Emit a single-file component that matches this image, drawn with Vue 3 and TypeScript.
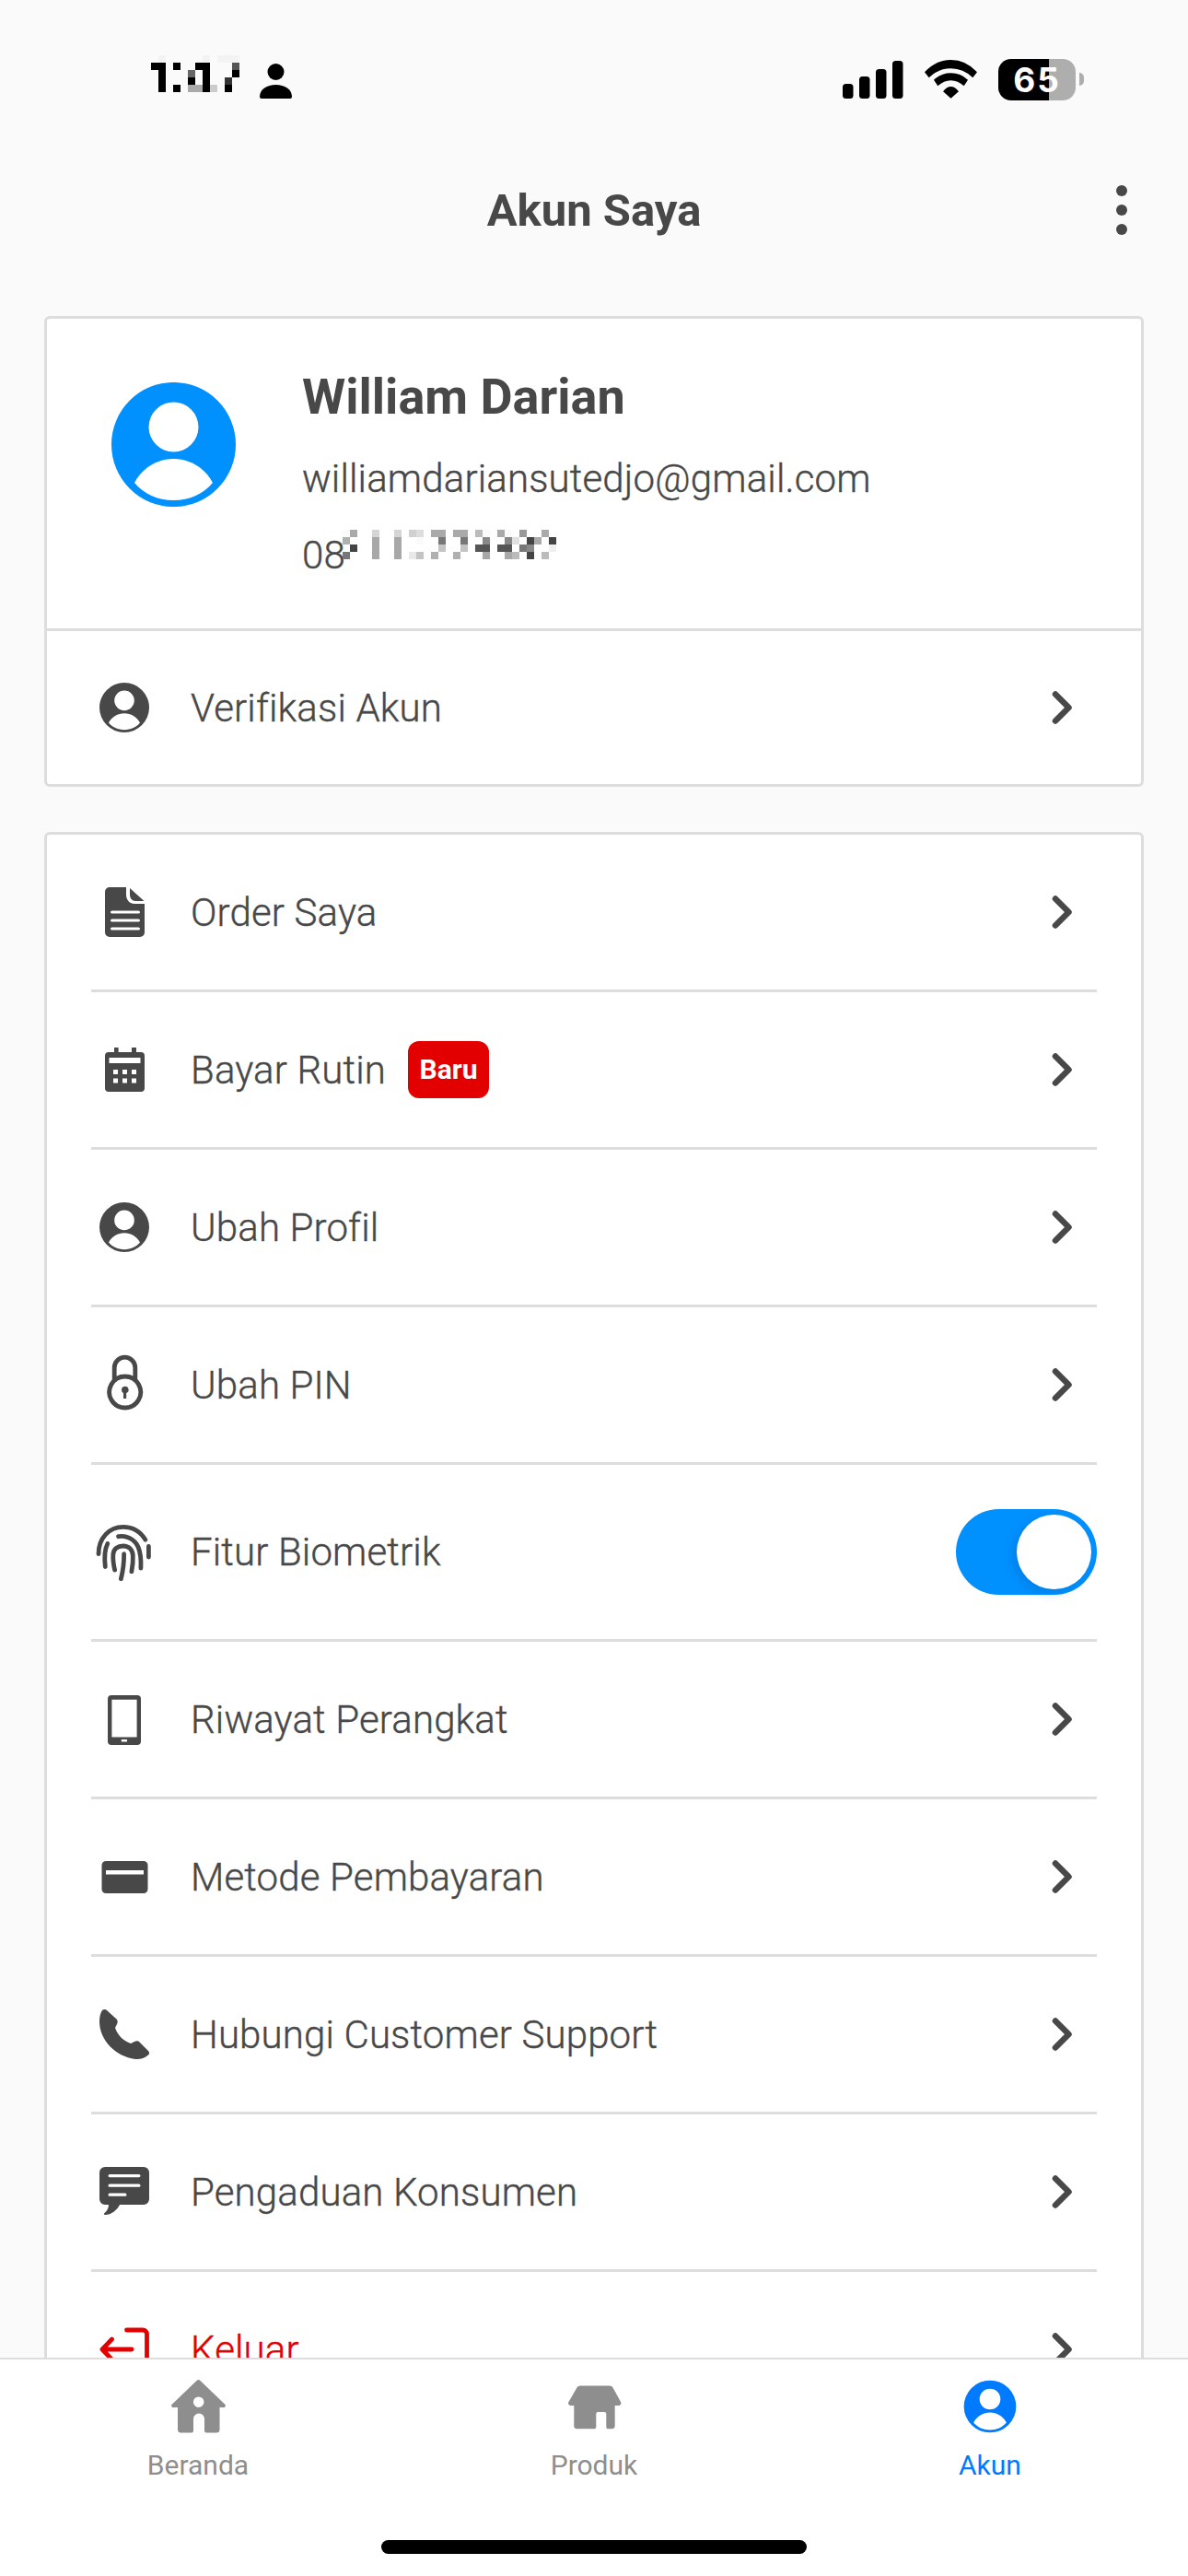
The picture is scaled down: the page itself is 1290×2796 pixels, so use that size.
<template>
  <div class="app">
    <!-- Status bar -->
    <div class="status">
      <div class="status-left">
        <svg class="time" viewBox="0 0 96 40" shape-rendering="crispEdges" role="img" aria-label="Waktu">
          <rect v-for="(p, i) in timePixels" :key="i" :x="p[0] * 8" :y="p[1] * 8" width="8" height="8" :fill="p[2]" />
        </svg>
        <svg class="status-person" viewBox="0 0 35 38">
          <circle cx="17.5" cy="9" r="9" />
          <path d="M0 36C0 28 8 23 17.5 23S35 28 35 36a2 2 0 0 1-2 2H2a2 2 0 0 1-2-2z" />
        </svg>
      </div>
      <div class="status-right">
        <svg class="signal" viewBox="0 0 66 41">
          <rect x="0" y="25" width="11.5" height="16" rx="3.5" />
          <rect x="18" y="17" width="11.5" height="24" rx="3.5" />
          <rect x="36" y="9" width="11.5" height="32" rx="3.5" />
          <rect x="54" y="0" width="11.5" height="41" rx="3.5" />
        </svg>
        <svg class="wifi" viewBox="0 0 57 42">
          <path d="M0 13.3Q12 0 28.5 0T57 13.3L52.3 19.3Q42 9.3 28.5 9.3T4.7 19.3z" />
          <path d="M10 21.7Q18 14.3 28.5 14.3T47 21.7L42.7 28.3Q36 22.3 28.5 22.3T14.3 28.3z" />
          <path d="M20 34.3Q24 29 28.5 29T37 34.3L28.5 41.7z" />
        </svg>
        <div class="battery">65</div>
      </div>
    </div>

    <!-- Header -->
    <header class="topbar">
      <h1 class="title">Akun Saya</h1>
      <button class="more" aria-label="Menu">
        <span class="dot"></span>
        <span class="dot"></span>
        <span class="dot"></span>
      </button>
    </header>

    <!-- Content -->
    <main class="content">
      <section class="card profile-card">
        <div class="profile">
          <svg class="avatar" viewBox="9 9 54 54">
            <path fill-rule="evenodd" :d="icons.person.fill" />
          </svg>
          <div class="profile-text">
            <div class="name">William Darian</div>
            <div class="email">williamdariansutedjo@gmail.com</div>
            <div class="phone">
              <span>08</span>
              <svg class="phone-blur" viewBox="0 0 232 32" shape-rendering="crispEdges" role="img" aria-label="Nomor disamarkan">
                <rect v-for="(p, i) in phonePixels" :key="i" :x="p[0] * 8" :y="p[1] * 8" width="8" height="8" :fill="p[2]" />
              </svg>
            </div>
          </div>
        </div>
        <div class="row verify-row">
          <svg class="icon" viewBox="0 0 72 72">
            <path fill="currentColor" fill-rule="evenodd" :d="icons.person.fill" />
          </svg>
          <span class="label">Verifikasi Akun</span>
          <svg class="chevron" viewBox="0 0 24 36"><path d="M4 3.5L18.5 18L4 32.5" /></svg>
        </div>
      </section>

      <section class="card menu-card">
        <div
          v-for="item in menu"
          :key="item.label"
          class="row"
          :class="{ 'toggle-row': item.toggle, danger: item.danger }"
        >
          <svg class="icon" viewBox="0 0 72 72">
            <path v-if="icons[item.icon].fill" fill="currentColor" fill-rule="evenodd" :d="icons[item.icon].fill" />
            <path v-if="icons[item.icon].line" class="icon-line" :d="icons[item.icon].line" />
          </svg>
          <span class="label">{{ item.label }}</span>
          <span v-if="item.badge" class="badge">{{ item.badge }}</span>
          <button
            v-if="item.toggle"
            class="toggle"
            :class="{ on: biometric }"
            aria-label="Fitur Biometrik"
            @click="biometric = !biometric"
          >
            <span class="knob"></span>
          </button>
          <svg v-else class="chevron" viewBox="0 0 24 36"><path d="M4 3.5L18.5 18L4 32.5" /></svg>
        </div>
      </section>
    </main>

    <!-- Bottom nav -->
    <nav class="tabbar">
      <div class="tabs">
        <div v-for="tab in tabs" :key="tab.label" class="tab" :class="{ active: tab.active }">
          <svg class="tab-icon" viewBox="0 0 72 72">
            <path fill="currentColor" fill-rule="evenodd" :d="icons[tab.icon].fill" :transform="tab.transform" />
          </svg>
          <span class="tab-label">{{ tab.label }}</span>
        </div>
      </div>
      <div class="home-indicator"></div>
    </nav>
  </div>
</template>

<script setup lang="ts">
import { ref } from 'vue'

type Pixel = [number, number, string]

interface IconDef {
  fill?: string
  line?: string
}

interface MenuItem {
  icon: string
  label: string
  badge?: string
  toggle?: boolean
  danger?: boolean
}

const biometric = ref(true)

const circle = (cx: number, cy: number, r: number) =>
  `M${cx - r} ${cy}a${r} ${r} 0 1 0 ${r * 2} 0a${r} ${r} 0 1 0 ${-r * 2} 0z`

const bar = (x: number, y: number, w: number) =>
  `M${x + 1.6} ${y}h${w - 3.2}a1.6 1.6 0 0 1 0 3.2h${-(w - 3.2)}a1.6 1.6 0 0 1 0-3.2z`

const square = (x: number, y: number, s: number) => `M${x} ${y}h${s}v${s}h${-s}z`

const icons: Record<string, IconDef> = {
  person: {
    fill:
      circle(36, 36, 27) +
      circle(36, 28.4, 10.8) +
      'M19 52.6C22.2 46.2 29 42.2 36 42.2C43 42.2 49.8 46.2 53 52.6C49 57.4 43 60.2 36 60.2C29 60.2 23 57.4 19 52.6z'
  },
  order: {
    fill:
      'M20 9H38V17C38 23 42 27 47 27H58V58a5 5 0 0 1-5 5H20a5 5 0 0 1-5-5V14a5 5 0 0 1 5-5z' +
      bar(21, 34.4, 32) +
      bar(21, 43.4, 32) +
      bar(21, 52.4, 32) +
      'M42 10L57.5 24H48C44.5 24 42 21 42 17z'
  },
  calendar: {
    fill:
      'M25 12h4.6v5h14.4v-5h5v5H54a4 4 0 0 1 4 4V56a4 4 0 0 1-4 4H19a4 4 0 0 1-4-4V21a4 4 0 0 1 4-4h6z' +
      'M19.5 23h34v6h-34z' +
      [24, 34, 44].flatMap((x) => [36, 45.5].map((y) => square(x, y, 5))).join('')
  },
  lock: {
    fill: 'M33 41.6a3.8 3.8 0 1 1 5.2 3.5V51h-3.2v-5.9a3.8 3.8 0 0 1-2-3.5z',
    line: 'M25.2 31V17.5a11.3 11.3 0 0 1 22.6 0V31M36.7 27a17 17 0 1 0 0.01 0z'
  },
  fingerprint: {
    line:
      'M8 37.7C8 20 20 8.4 34.6 8.4C45 8.4 53.5 13.5 58.9 22.2M62.4 29.5V41' +
      'M15.3 51.5C14 40 15 32 17.8 26.5M29.6 18.7C37 17 47 21 51 30C53.5 36 54.3 45 53.9 53.2' +
      'M25.6 55C24 48 23.5 43 23.9 37.7C24.5 32 29 29 34.6 29C41 29 45 33 45.3 39.5C45.6 45 45 51 43.9 56.7' +
      'M32.4 64.6C34.5 56 35.8 47 35.6 37.7'
  },
  device: {
    fill:
      'M22 10H50a4 4 0 0 1 4 4V60a4 4 0 0 1-4 4H22a4 4 0 0 1-4-4V14a4 4 0 0 1 4-4z' +
      'M22.4 14.8V55.5H49.6V14.8z' +
      'M32.8 58h6.2v2.4h-6.2z'
  },
  card: {
    fill:
      'M16 19H57a4.5 4.5 0 0 1 4.5 4.5V49.5a4.5 4.5 0 0 1-4.5 4.5H16a4.5 4.5 0 0 1-4.5-4.5V23.5a4.5 4.5 0 0 1 4.5-4.5z' +
      'M16 29V33.5H57V29z'
  },
  phone: {
    fill:
      'M12 10C14 8.5 16 9 17 10L27.5 19.5C29 21 29 23 28 25L26 29C28.5 36.5 35 43.5 43 46L47 44C49 43 51 43 52.5 44.5L62 54C63.5 55.5 63.5 57 62 58.5C58 62 53 63.5 48 63C26 60 9 42 9 22C9 17 10 13 12 10z'
  },
  chat: {
    fill:
      'M15 9H57a6 6 0 0 1 6 6V44a6 6 0 0 1-6 6H31C28 56 22 61 15 61a1 1 0 0 1-1-1.5C17 57 19 54 19 50H15a6 6 0 0 1-6-6V15a6 6 0 0 1 6-6z' +
      bar(18.5, 17, 35) +
      bar(18.5, 27.6, 35) +
      bar(18.5, 37.6, 20)
  },
  logout: {
    line: 'M38.5 15H56a4.5 4.5 0 0 1 4.5 4.5V52.5a4.5 4.5 0 0 1-4.5 4.5H38.5M44 36H13M22.5 25L12 36L22.5 47'
  },
  home: {
    fill:
      'M34.5 8a3 3 0 0 1 4 0L64.5 33a2 2 0 0 1-1.5 4H59.5V61a3.5 3.5 0 0 1-3.5 3.5H45a2 2 0 0 1-2-2V49.5a6 6 0 0 0-12 0V62.5a2 2 0 0 1-2 2H17.5a3.5 3.5 0 0 1-3.5-3.5V37H10a2 2 0 0 1-1.5-4z' +
      circle(36.7, 31.2, 5.8)
  },
  store: {
    fill:
      'M21 13.5H53a4 4 0 0 1 3.5 2L65 31a2.5 2.5 0 0 1-2 4H58.7V57a3.2 3.2 0 0 1-3.2 3.2H51a1.7 1.7 0 0 1-1.7-1.7V44a2 2 0 0 0-2-2H40.3a2 2 0 0 0-2 2V58.5a1.7 1.7 0 0 1-1.7 1.7H17.5a3.2 3.2 0 0 1-3.2-3.2V35H10.5a2.5 2.5 0 0 1-2-4L17.5 15.5a4 4 0 0 1 3.5-2z'
  }
}

const menu: MenuItem[] = [
  { icon: 'order', label: 'Order Saya' },
  { icon: 'calendar', label: 'Bayar Rutin', badge: 'Baru' },
  { icon: 'person', label: 'Ubah Profil' },
  { icon: 'lock', label: 'Ubah PIN' },
  { icon: 'fingerprint', label: 'Fitur Biometrik', toggle: true },
  { icon: 'device', label: 'Riwayat Perangkat' },
  { icon: 'card', label: 'Metode Pembayaran' },
  { icon: 'phone', label: 'Hubungi Customer Support' },
  { icon: 'chat', label: 'Pengaduan Konsumen' },
  { icon: 'logout', label: 'Keluar', danger: true }
]

const tabs = [
  { icon: 'home', label: 'Beranda' },
  { icon: 'store', label: 'Produk' },
  { icon: 'person', label: 'Akun', active: true, transform: 'translate(-1.8 -1.8) scale(1.05)' }
]

// Jam di status bar disamarkan jadi blok piksel
const timePixels: Pixel[] = [
  [1, 0, '#f3f3f3'], [7, 0, '#f3f3f3'], [9, 0, '#f3f3f3'], [10, 0, '#f3f3f3'], [11, 0, '#f3f3f3'],
  [0, 1, '#000'], [1, 1, '#000'], [3, 1, '#000'], [6, 1, '#000'], [7, 1, '#000'], [11, 1, '#555'],
  [1, 2, '#000'], [5, 2, '#666'], [7, 2, '#000'], [11, 2, '#000'],
  [1, 3, '#000'], [5, 3, '#000'], [7, 3, '#000'], [10, 3, '#333'],
  [1, 4, '#000'], [3, 4, '#000'], [5, 4, '#aaa'], [6, 4, '#aaa'], [7, 4, '#000'], [8, 4, '#ccc'], [10, 4, '#000']
]

// Nomor telepon yang disamarkan
const phonePixels: Pixel[] = [
  [0, 0, '#fafafa'], [1, 0, '#aaa'], [4, 0, '#d5d5d5'], [7, 0, '#d5d5d5'], [9, 0, '#d0d0d0'], [10, 0, '#ddd'],
  [12, 0, '#aaa'], [13, 0, '#aaa'], [15, 0, '#aaa'], [16, 0, '#aaa'], [18, 0, '#bbb'], [19, 0, '#fafafa'],
  [21, 0, '#aaa'], [22, 0, '#fafafa'], [24, 0, '#999'], [27, 0, '#aaa'],
  [0, 1, '#b0b0b0'], [4, 1, '#a8a8a8'], [7, 1, '#a8a8a8'], [10, 1, '#fafafa'], [13, 1, '#777'], [16, 1, '#777'],
  [19, 1, '#888'], [22, 1, '#888'], [23, 1, '#e0e0e0'], [25, 1, '#444'], [26, 1, '#aaa'], [28, 1, '#444'],
  [1, 2, '#444'], [4, 2, '#a8a8a8'], [7, 2, '#a8a8a8'], [13, 2, '#c4c4c4'], [16, 2, '#c4c4c4'], [18, 2, '#555'],
  [19, 2, '#555'], [21, 2, '#555'], [22, 2, '#555'], [24, 2, '#777'], [25, 2, '#888'], [28, 2, '#f0f0f0'],
  [0, 3, '#777'], [4, 3, '#a8a8a8'], [7, 3, '#a8a8a8'], [9, 3, '#e8e8e8'], [10, 3, '#c4c4c4'], [12, 3, '#b0b0b0'],
  [15, 3, '#b0b0b0'], [19, 3, '#a8a8a8'], [22, 3, '#a8a8a8'], [23, 3, '#bbb'], [25, 3, '#444'], [27, 3, '#bbb']
]
</script>

<style scoped>
.app {
  width: 1290px;
  height: 2796px;
  display: flex;
  flex-direction: column;
  overflow: hidden;
  background: #fafafa;
  color: #484848;
  font-family: Roboto, "Liberation Sans", sans-serif;
}

/* Status bar */
.status {
  flex: none;
  box-sizing: border-box;
  height: 130px;
  padding: 42px 113px 0 164px;
  display: flex;
  align-items: center;
  justify-content: space-between;
  color: #000;
}

.status-left {
  display: flex;
  align-items: center;
  gap: 22px;
}

.time {
  width: 96px;
  height: 40px;
  margin-bottom: 12px;
}

.status-person {
  width: 35px;
  height: 38px;
  margin-top: 4px;
  fill: #000;
}

.status-right {
  display: flex;
  align-items: center;
  gap: 23px;
}

.signal {
  width: 66px;
  height: 41px;
  fill: #000;
}

.wifi {
  width: 57px;
  height: 42px;
  fill: #000;
}

.battery {
  position: relative;
  width: 84px;
  height: 45px;
  margin-right: 9px;
  border-radius: 14px;
  background: linear-gradient(90deg, #000 65%, #aeaeae 65%);
  color: #fff;
  font-family: Inter, Roboto, sans-serif;
  font-size: 37px;
  font-weight: 700;
  letter-spacing: 2px;
  line-height: 45px;
  text-align: center;
}

.battery::after {
  content: "";
  position: absolute;
  left: 88px;
  top: 15px;
  width: 5px;
  height: 14px;
  border-radius: 0 7px 7px 0;
  background: #aeaeae;
}

/* Header */
.topbar {
  flex: none;
  box-sizing: border-box;
  height: 196px;
  padding-right: 66px;
  display: grid;
  grid-template-columns: 1fr auto 1fr;
  align-items: center;
}

.title {
  grid-column: 2;
  margin: 0 0 0 66px;
  font-size: 49px;
  font-weight: 700;
}

.more {
  grid-column: 3;
  justify-self: end;
  padding: 0;
  border: none;
  background: none;
  display: flex;
  flex-direction: column;
  gap: 9px;
}

.dot {
  width: 12px;
  height: 12px;
  border-radius: 50%;
  background: #484848;
}

/* Content */
.content {
  flex: 1;
  min-height: 0;
  overflow: hidden;
  padding: 17px 48px 0;
  display: flex;
  flex-direction: column;
  gap: 49px;
}

.card {
  flex: none;
  background: #fff;
  border: 3px solid #ddd;
  border-radius: 6px;
  padding: 0 48px;
}

.profile-card {
  padding: 0;
}

.profile {
  height: 288px;
  padding: 48px 0 0 70px;
  display: flex;
  gap: 72px;
  border-bottom: 3px solid #ddd;
}

.avatar {
  flex: none;
  width: 135px;
  height: 135px;
  margin-top: 21px;
  fill: #0091ff;
}

.name {
  margin-top: 1px;
  font-size: 54px;
  font-weight: 700;
  line-height: 72px;
}

.email,
.phone,
.label {
  font-size: 42px;
  font-weight: 300;
  letter-spacing: 0.15px;
  -webkit-text-stroke: 0.4px;
}

.email {
  margin-top: 23px;
  line-height: 60px;
}

.phone {
  margin-top: 23px;
  line-height: 60px;
  display: flex;
  align-items: center;
}

.phone-blur {
  width: 232px;
  height: 32px;
  margin-top: -24px;
  margin-left: -3px;
}

.row {
  box-sizing: border-box;
  height: 171px;
  display: flex;
  align-items: center;
  border-bottom: 3px solid #ddd;
}

.verify-row {
  height: 166px;
  margin: 0 48px;
  border-bottom: none;
}

.toggle-row {
  height: 192px;
}

.danger {
  color: #e20000;
}

.icon {
  flex: none;
  width: 72px;
  height: 72px;
  margin-right: 36px;
}

.icon-line {
  fill: none;
  stroke: currentColor;
  stroke-width: 4.8;
  stroke-linecap: round;
  stroke-linejoin: round;
}

.badge {
  margin-left: 24px;
  width: 88px;
  height: 62px;
  border-radius: 12px;
  background: #e20000;
  color: #fff;
  font-size: 30px;
  font-weight: 700;
  line-height: 62px;
  text-align: center;
}

.chevron {
  flex: none;
  width: 24px;
  height: 36px;
  margin-left: auto;
  margin-right: 25px;
  fill: none;
  stroke: #484848;
  stroke-width: 6.5;
  stroke-linecap: round;
  stroke-linejoin: round;
}

.toggle {
  box-sizing: border-box;
  width: 153px;
  height: 93px;
  margin-left: auto;
  padding: 6px;
  border: none;
  border-radius: 47px;
  background: #ccc;
  display: flex;
}

.toggle.on {
  background: #0091ff;
  justify-content: flex-end;
}

.knob {
  width: 81px;
  height: 81px;
  border-radius: 50%;
  background: #fff;
  box-shadow: -4px 4px 12px rgba(0, 60, 140, 0.2);
}

/* Bottom nav */
.tabbar {
  flex: none;
  box-sizing: border-box;
  height: 237px;
  padding-top: 15px;
  background: #fff;
  border-top: 2px solid #ddd;
  display: flex;
  flex-direction: column;
  align-items: center;
}

.tabs {
  width: 100%;
  display: grid;
  grid-template-columns: repeat(3, 1fr);
}

.tab {
  display: flex;
  flex-direction: column;
  align-items: center;
  color: #8e8e8e;
}

.tab.active {
  color: #007aff;
}

.tab-icon {
  width: 72px;
  height: 72px;
}

.tab-label {
  margin-top: 9px;
  font-size: 30px;
  line-height: 38px;
}

.home-indicator {
  width: 462px;
  height: 15px;
  margin-top: auto;
  margin-bottom: 24px;
  border-radius: 8px;
  background: #000;
}
</style>

<style>
html,
body {
  margin: 0;
  background: #fafafa;
}
</style>
